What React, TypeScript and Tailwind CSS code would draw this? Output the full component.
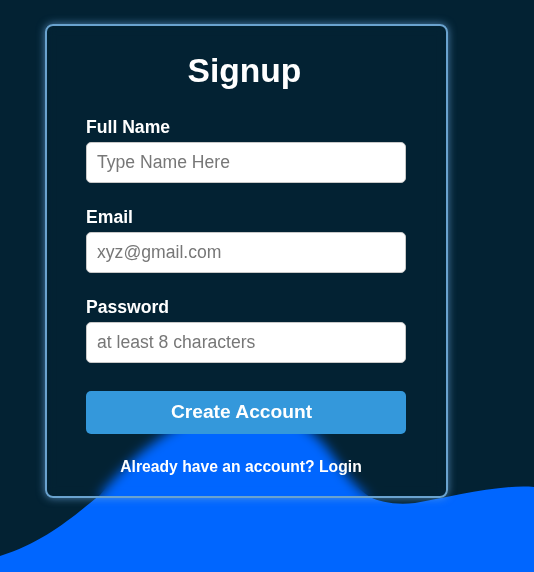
import React from "react";

const fields = [
  { label: "Full Name", type: "text", placeholder: "Type Name Here" },
  { label: "Email", type: "email", placeholder: "xyz@gmail.com" },
  { label: "Password", type: "password", placeholder: "at least 8 characters" },
];

// background wave, sits behind the card (the card blurs it)
const Wave: React.FC = () => (
  <svg
    className="absolute left-0 top-0 h-[572px] w-[534px]"
    viewBox="0 0 534 572"
    preserveAspectRatio="none"
  >
    <path
      fill="#0066ff"
      d="M0,556 C45,542 75,515 100,495 C120,470 140,452 160,438 C190,418 215,408 242,408 C275,408 300,420 320,440 C335,455 345,480 370,497 C380,502 395,505 415,503 C450,497 500,484 534,487 L534,572 L0,572 Z"
    />
  </svg>
);

const App: React.FC = () => {
  return (
    <div className="relative min-h-[572px] w-full overflow-hidden bg-[#032233] font-['Liberation_Sans',Arial,sans-serif] text-white">
      <Wave />
      <div className="relative pl-[45px] pt-[24px]">
        <form
          onSubmit={(e) => e.preventDefault()}
          className="flex h-[474px] w-[403px] flex-col rounded-[8px] border-2 border-[#6aa3cf] bg-transparent pl-[39px] pr-[40px] pb-[20px] pt-[26px] shadow-[0_0_8px_rgba(110,170,225,0.7)] backdrop-blur-[6px]"
        >
          <h1 className="pr-[3px] text-center text-[33.6px] font-bold leading-[38px]">Signup</h1>

          <div className="mt-[27px] flex flex-col gap-[24px]">
            {fields.map((f) => (
              <div key={f.label} className="flex flex-col gap-[5px]">
                <label className="text-[17.6px] font-bold leading-[20px]">{f.label}</label>
                <input
                  type={f.type}
                  placeholder={f.placeholder}
                  className="h-[41px] w-full rounded-[5px] border border-[#c8c8c8] bg-white px-[10px] text-[17.6px] text-[#333] placeholder:text-[#777] outline-none"
                />
              </div>
            ))}
          </div>

          <button
            type="submit"
            className="mt-[28px] h-[43px] w-full rounded-[5px] bg-[#3498db] pr-[9px] text-[19.2px] font-bold text-white"
          >
            Create Account
          </button>

          <p className="mt-[24px] pr-[10px] text-center text-[15.7px] font-bold leading-[18px]">
            Already have an account? <a href="#" className="text-white">Login</a>
          </p>
        </form>
      </div>
    </div>
  );
};

export default App;
